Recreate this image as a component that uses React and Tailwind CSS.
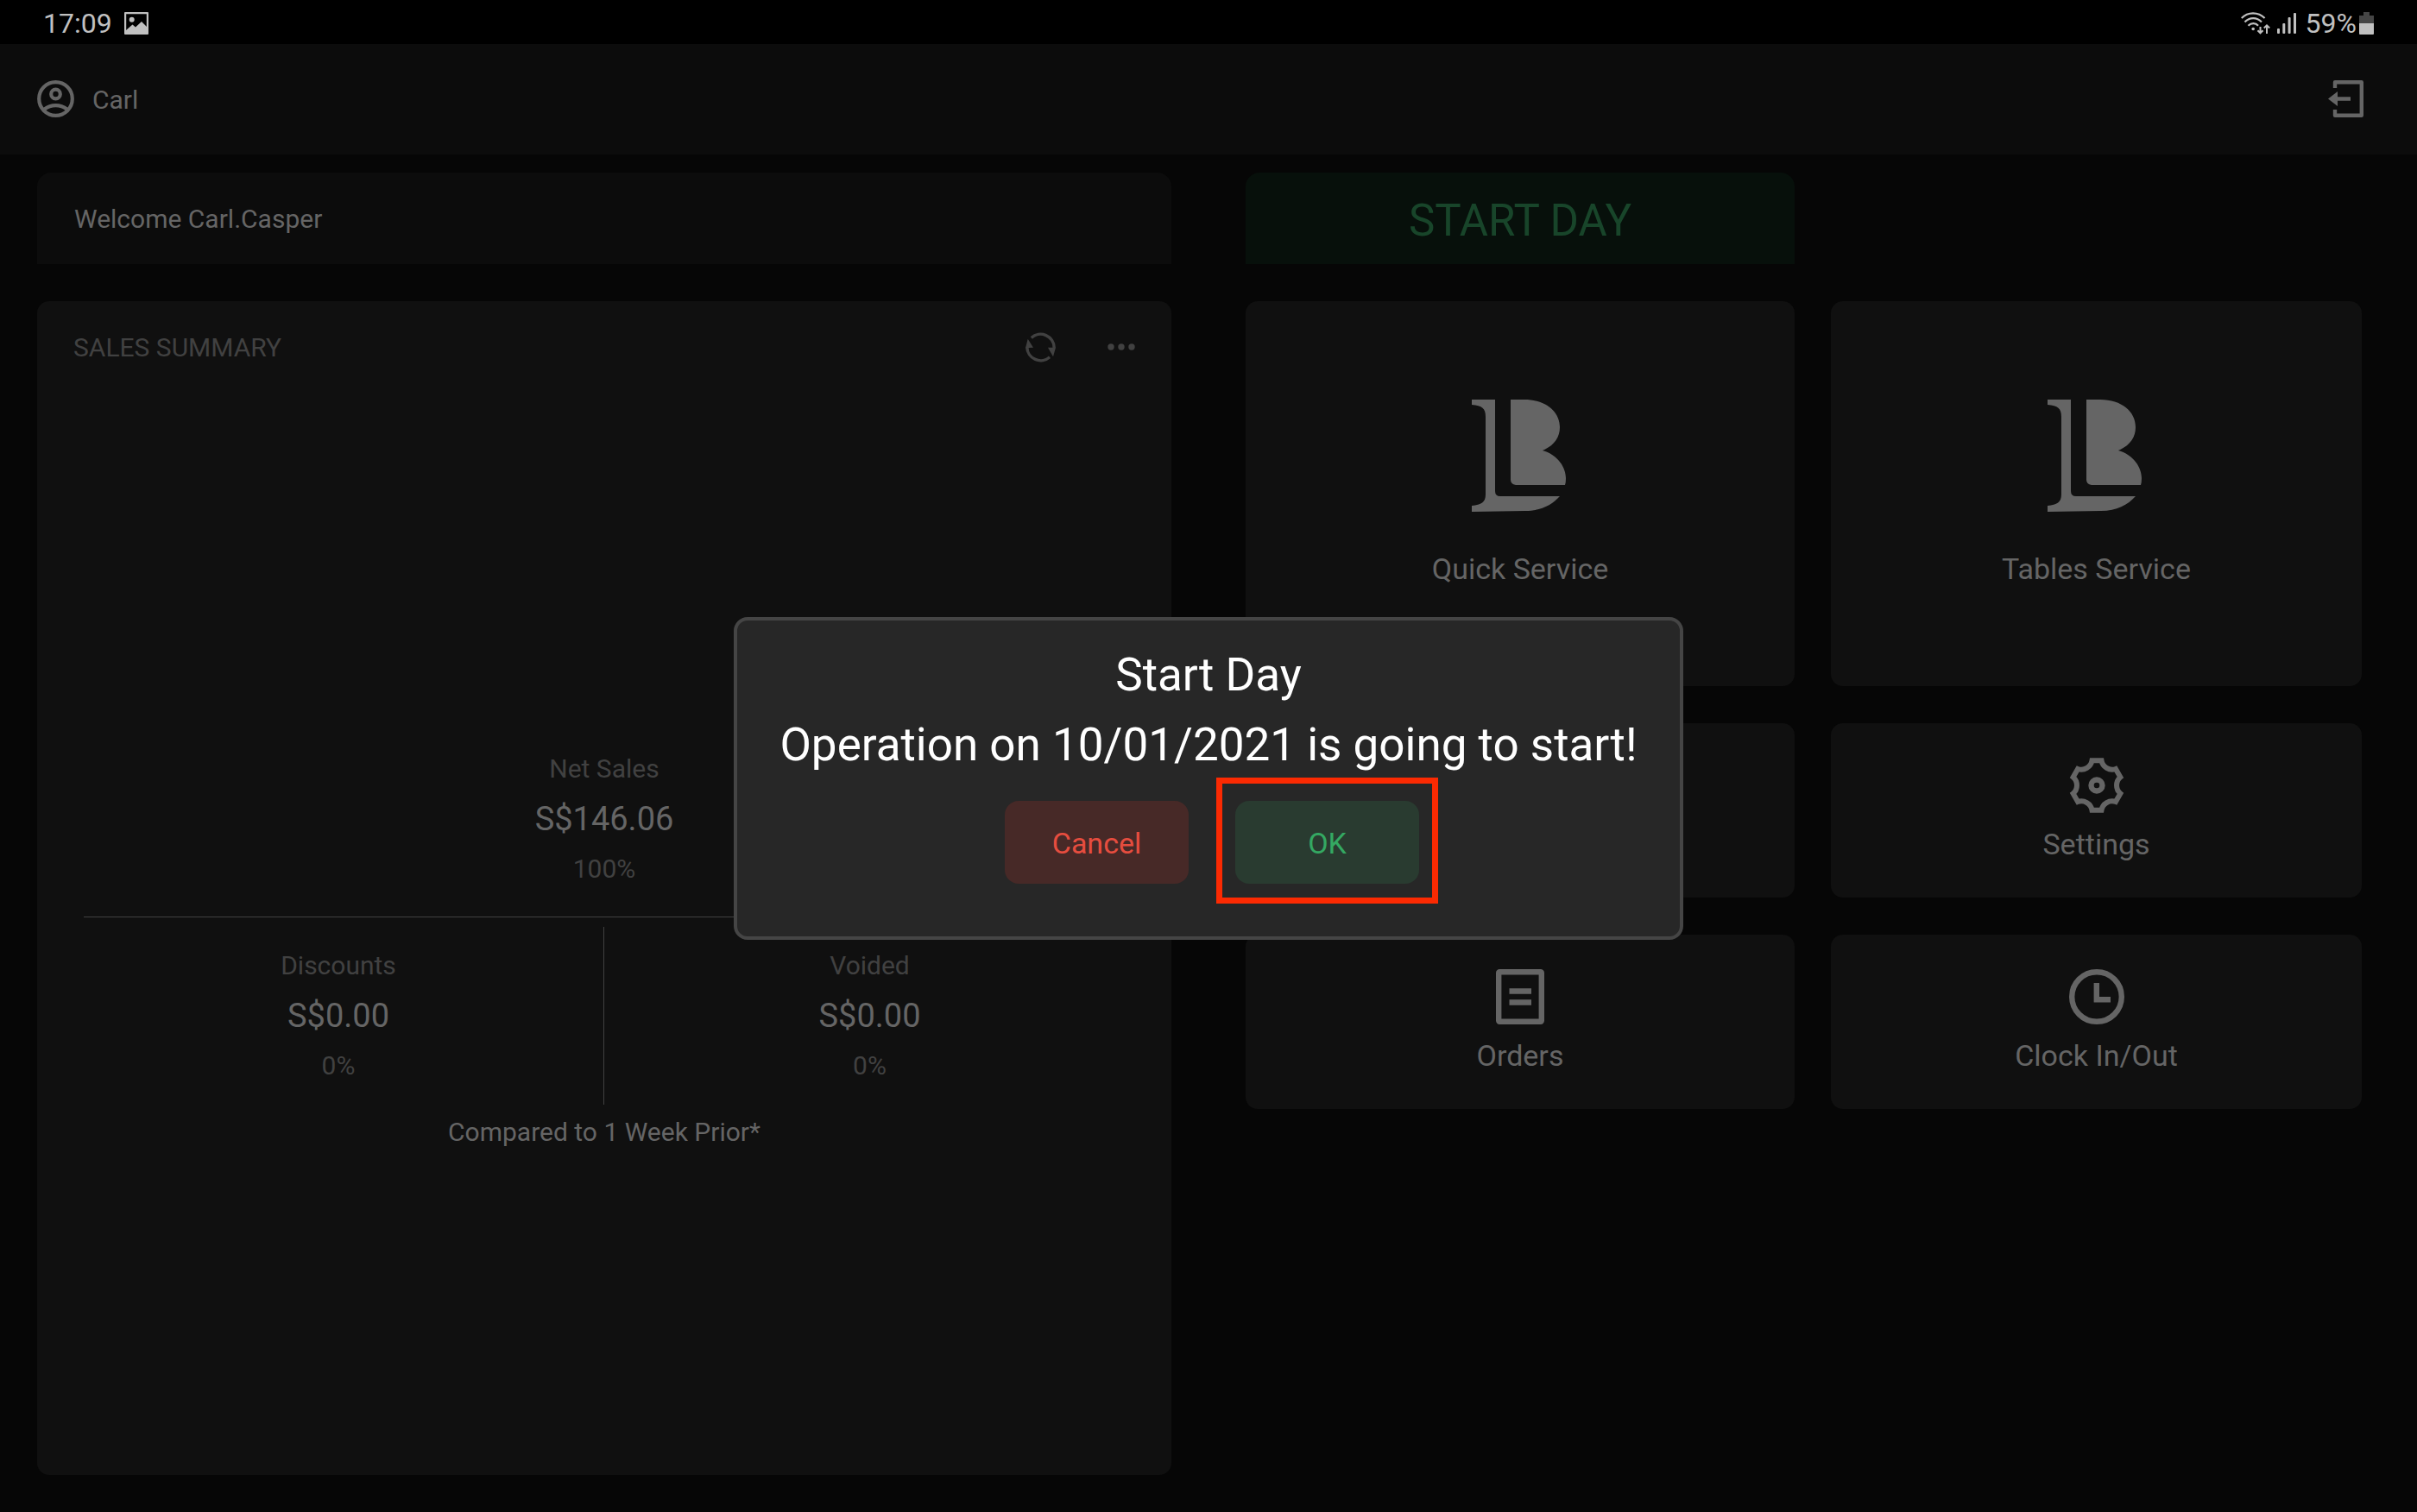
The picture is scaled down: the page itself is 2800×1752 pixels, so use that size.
import React from 'react';
import clsx from 'clsx';

const UserIcon = () => (
  <svg width="43" height="44" viewBox="0 0 43 44" fill="none" stroke="currentColor" strokeWidth="4.2">
    <circle cx="21.5" cy="21.5" r="19.3" />
    <circle cx="21.5" cy="16" r="5.3" />
    <path d="M8.5 33.5C16 27.7 27 27.7 34.5 33.5" />
  </svg>
);

const LogoutIcon = () => (
  <svg width="42" height="44" viewBox="0 0 42 44">
    <path d="M8 9V2.2H38.8V40.8H8V34" fill="none" stroke="currentColor" strokeWidth="4.4" strokeLinejoin="round" />
    <path d="M0 21.5L11 13V19.3H26V23.7H11V30Z" fill="currentColor" />
  </svg>
);

const ImageIcon = () => (
  <svg width="28" height="26" viewBox="0 0 28 26">
    <rect x="1" y="1" width="26" height="24" rx="1" fill="none" stroke="currentColor" strokeWidth="2.4" />
    <circle cx="8.7" cy="8.7" r="3" fill="currentColor" />
    <path d="M2 21L9.5 14.5L13 17.5L20 11L26 17V25H2Z" fill="currentColor" />
  </svg>
);

const WifiIcon = () => (
  <svg width="34" height="26" viewBox="0 0 34 26" fill="none" stroke="currentColor">
    <path d="M.8 7C8-.6 20-.6 27.6 7" strokeWidth="2.2" />
    <path d="M4.5 11.5C10 5.6 18.5 5.6 24 11.5" strokeWidth="2.2" />
    <path d="M8.5 15.8C12 12.2 17 12.2 20 15.8" strokeWidth="2.2" />
    <circle cx="14.2" cy="19.5" r="1.8" fill="currentColor" stroke="none" />
    <path d="M22.5 17V24M19.5 21.2L22.5 24.4L25.5 21.2M30 25V15.5M26.8 18.5L30 15.3L33.2 18.5" strokeWidth="2" />
  </svg>
);

const SignalIcon = () => (
  <svg width="22" height="24" viewBox="0 0 22 24" fill="currentColor">
    <rect x="0" y="18" width="3" height="6" rx="1" />
    <rect x="6.3" y="12" width="3" height="12" rx="1" />
    <rect x="12.6" y="5" width="3" height="19" rx="1" />
    <rect x="19" y="0" width="3" height="24" rx="1" />
  </svg>
);

const BatteryIcon = () => (
  <svg width="17" height="26" viewBox="0 0 17 26">
    <path d="M5 0H12V4H17V13H0V4H5Z" fill="#454545" />
    <path d="M0 13H17V25Q17 26 16 26H1Q0 26 0 25Z" fill="currentColor" />
  </svg>
);

const RefreshIcon = () => (
  <svg width="35" height="35" viewBox="0 0 35 35">
    <path d="M6.8 6.5A15.7 15.7 0 0 1 33.2 18M28 28.7A15.7 15.7 0 0 1 1.8 17.5" fill="none" stroke="currentColor" strokeWidth="3.5" />
    <path d="M26 17.7H35L32 28.3ZM2.7 7.7L9 17.7L0 18.2Z" fill="currentColor" />
  </svg>
);

const MoreIcon = () => (
  <svg width="32" height="8" viewBox="0 0 32 8" fill="currentColor">
    <circle cx="4" cy="4" r="3.7" />
    <circle cx="16" cy="4" r="3.7" />
    <circle cx="28" cy="4" r="3.7" />
  </svg>
);

const LogoIcon = () => (
  <svg width="113" height="130" viewBox="0 0 113 130" fill="currentColor">
    <path d="M0 0H27V106Q27 112 33 112H102C93 122 80 129 62 129L0 130V123C11 122 16 119 16 110V20C16 10 12 7 0 6Z" />
    <path d="M45 0H61C86 0 102 14 102 32C102 45 94 54 82 59C100 64 109 79 109 91Q109 96 108 99H51Q45 98 45 93Z" />
  </svg>
);

const SettingsIcon = () => (
  <svg width="64" height="64" viewBox="-32 -32 64 64" fill="none" stroke="currentColor" strokeWidth="6">
    <path d="M-5.5-28.7H5.5A12.5 12.5 0 0 0 21.9-19L27.4-9.5A12.5 12.5 0 0 0 27.4 9.5L21.9 19A12.5 12.5 0 0 0 5.5 28.7H-5.5A12.5 12.5 0 0 0-21.9 19L-27.4 9.5A12.5 12.5 0 0 0-27.4-9.5L-21.9-19A12.5 12.5 0 0 0-5.5-28.7Z" />
    <circle r="6.5" strokeWidth="6.4" />
  </svg>
);

const OrdersIcon = () => (
  <svg width="56" height="64" viewBox="0 0 56 64" fill="none" stroke="currentColor" strokeWidth="6.4">
    <rect x="3.2" y="3.2" width="49.6" height="57.6" rx="1" />
    <path d="M15.5 25.5H41M15.5 38.5H41" />
  </svg>
);

const ClockIcon = () => (
  <svg width="64" height="64" viewBox="0 0 64 64" fill="none" stroke="currentColor" strokeWidth="6.4">
    <circle cx="32" cy="32" r="28.8" />
    <path d="M31.8 16V35.2H48" />
  </svg>
);

const Stat = ({ label, value, percent }) => (
  <div className="text-center">
    <div className="text-[30px] leading-[56px] text-[#414141]">{label}</div>
    <div className="text-[38px] leading-[60px]">{value}</div>
    <div className="text-[30px] leading-[56px] text-[#414141]">{percent}</div>
  </div>
);

const Tile = ({ icon, label, large }) => (
  <button
    className={clsx(
      'flex flex-col items-center justify-center rounded-[14px] bg-[#101010]',
      large ? 'h-[446px] gap-[44px]' : 'h-[202px] gap-[14px]'
    )}
  >
    {icon}
    <span className="text-[34px] leading-[44px]">{label}</span>
  </button>
);

const StartDayDialog = () => (
  <div className="absolute inset-x-0 top-[51px] bottom-0 flex items-center justify-center">
    <div
      role="dialog"
      aria-labelledby="dialog-title"
      className="flex h-[374px] w-[1100px] flex-col items-center rounded-[16px] border-4 border-[#454545] bg-[#272727] pt-[23px]"
    >
      <h2 id="dialog-title" className="text-[53px] leading-[81px] text-white">Start Day</h2>
      <p className="text-[53px] leading-[81px] text-white">Operation on 10/01/2021 is going to start!</p>
      <div className="mt-6 ml-2 flex gap-[54px] text-[34px]">
        <button className="h-[96px] w-[213px] rounded-[16px] bg-[#472927] pt-1 text-[#e64d3f]">Cancel</button>
        <div className="relative">
          <button className="h-[96px] w-[213px] rounded-[16px] bg-[#293b30] pt-1 text-[#34a862]">OK</button>
          <span className="pointer-events-none absolute -inset-x-[22px] -top-[27px] -bottom-[23px] border-[7px] border-[#fb2a02]" />
        </div>
      </div>
    </div>
  </div>
);

const App = () => {
  return (
    <div className="relative flex min-h-screen flex-col bg-[#060606] font-[Roboto,sans-serif] text-[#656565]">
      <div className="flex h-[51px] items-center justify-between bg-black px-[50px] text-[32px] text-[#c0c0c0]">
        <div className="flex items-center gap-[14px] pt-[3px]">
          <span>17:09</span>
          <ImageIcon />
        </div>
        <div className="flex items-center pt-[3px]">
          <WifiIcon />
          <span className="ml-2"><SignalIcon /></span>
          <span className="mr-[3px] ml-[11px]">59%</span>
          <BatteryIcon />
        </div>
      </div>

      <header className="flex h-[128px] items-center justify-between bg-[#0c0c0c] pr-[61px] pl-[43px]">
        <div className="flex items-center gap-[21px]">
          <UserIcon />
          <span className="text-[30px]">Carl</span>
        </div>
        <button aria-label="Log out"><LogoutIcon /></button>
      </header>

      <main className="grid flex-1 grid-cols-[1314fr_1293fr] gap-[86px] pt-[21px] pr-[64px] pb-[43px] pl-[43px]">
        <section className="flex flex-col gap-[43px]">
          <div className="flex h-[106px] items-center rounded-t-[16px] bg-[#0c0c0c] px-[43px] text-[30px]">
            Welcome Carl.Casper
          </div>

          <div className="flex flex-1 flex-col rounded-[14px] bg-[#101010] px-[42px]">
            <div className="flex h-[106px] items-center justify-between text-[#414141]">
              <h1 className="text-[30px]">SALES SUMMARY</h1>
              <div className="flex items-center gap-[60px]">
                <button aria-label="Refresh"><RefreshIcon /></button>
                <button aria-label="More"><MoreIcon /></button>
              </div>
            </div>

            <div className="flex flex-1 flex-col justify-center pt-[38px]">
              <Stat label="Net Sales" value="S$146.06" percent="100%" />
              <hr className="mx-3 mt-[27px] border-[#414141]" />
              <div className="mt-[11px] grid grid-cols-2 divide-x divide-[#414141]">
                <div className="py-[17px]"><Stat label="Discounts" value="S$0.00" percent="0%" /></div>
                <div className="py-[17px]"><Stat label="Voided" value="S$0.00" percent="0%" /></div>
              </div>
              <p className="mt-1 text-center text-[30px] leading-[56px]">Compared to 1 Week Prior*</p>
            </div>
          </div>
        </section>

        <section className="grid grid-cols-[636fr_615fr] content-start gap-x-[42px] gap-y-[43px]">
          <button className="h-[106px] rounded-t-[16px] bg-[#07100b] pt-[6px] text-[51px] text-[#18452a]">START DAY</button>
          <div />
          <Tile large icon={<LogoIcon />} label="Quick Service" />
          <Tile large icon={<LogoIcon />} label="Tables Service" />
          <div className="h-[202px] rounded-[14px] bg-[#101010]" />
          <Tile icon={<SettingsIcon />} label="Settings" />
          <Tile icon={<OrdersIcon />} label="Orders" />
          <Tile icon={<ClockIcon />} label="Clock In/Out" />
        </section>
      </main>

      <StartDayDialog />
    </div>
  );
};

export default App;
